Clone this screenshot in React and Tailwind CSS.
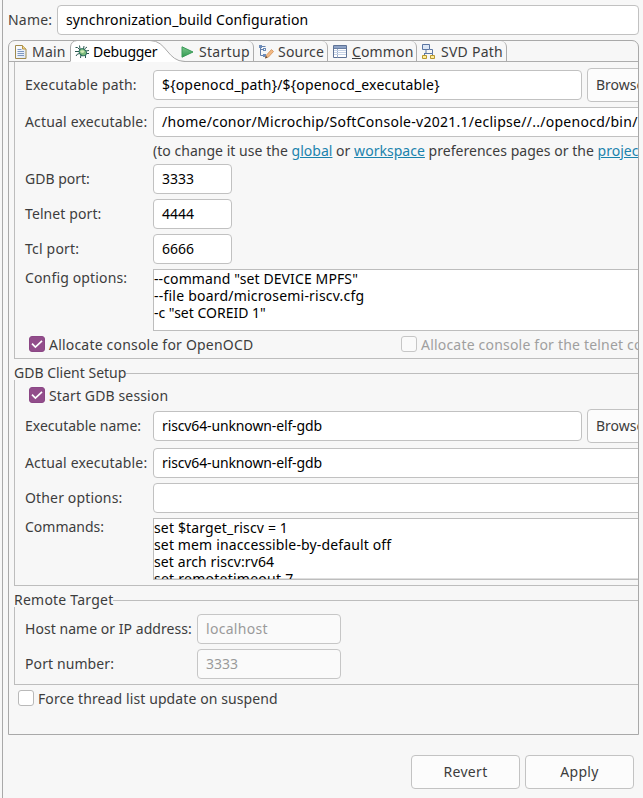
import React from "react";

const line = "border-[#bdbdbd]";

function T({ className = "", children }) {
  return <span className={`inline-block whitespace-nowrap ${className}`}>{children}</span>;
}

function Input({ className = "", tone = "bg-white border-[#c1c1c1] text-black", children }) {
  return (
    <div className={`flex h-[30px] shrink-0 items-center rounded-[4px] border pb-[2px] pl-2 ${tone} ${className}`}>
      {children}
    </div>
  );
}

function Row({ label, className = "", children }) {
  return (
    <div className={`flex h-[30px] items-center ${className}`}>
      <div className="w-32 shrink-0 pb-[2px]">{label}</div>
      {children}
    </div>
  );
}

function Button({ className = "", children }) {
  return (
    <button className={`flex h-[34px] shrink-0 items-center rounded-[4px] border border-[#c3c3c3] bg-[#fcfcfc] pb-[2px] ${className}`}>
      {children}
    </button>
  );
}

function Check({ checked, disabled }) {
  if (checked) {
    return (
      <span className="flex size-4 shrink-0 items-center justify-center rounded-[3px] border border-[#8b4785] bg-[#924d8b]">
        <svg width="14" height="14" viewBox="0 0 14 14" fill="none" stroke="#fff" strokeWidth="1.7">
          <path d="M2 6.600 5.400 10 12 3.800" />
        </svg>
      </span>
    );
  }
  return <span className={`size-4 shrink-0 rounded-[3px] border ${disabled ? "border-[#c6c6c6] bg-[#fafafa]" : "border-[#b9b9b9] bg-white"}`} />;
}

function DocIcon() {
  return (
    <svg width="12" height="14" viewBox="0 0 12 14">
      <defs>
        <linearGradient id="doc" x1="0" y1="0" x2="1" y2="1">
          <stop offset="0" stopColor="#fff" />
          <stop offset="1" stopColor="#dbe6f5" />
        </linearGradient>
      </defs>
      <path d="M.5.5h7l3.500 3.500v9.500H.5z" fill="url(#doc)" stroke="#a08a4c" />
      <path d="M7.500.5V4H11" fill="#f0d78c" stroke="#b89446" />
      <path d="M2.500 4.500h4M2.500 6.500h6.500M2.500 8.500h6.500M2.500 10.500h6.500" stroke="#7d97c0" />
    </svg>
  );
}

function BugIcon() {
  return (
    <svg width="16" height="16" viewBox="0 0 16 16" fill="none">
      <path d="M5.500 1.500 6 5M10 2 9.500 5M1.500 3.500h2L6 6M1 7.500h4M2 12l1.500-2L6 9.500M6.500 14l.5-3.500M11.500 14v-2.500L10 10.500M10.500 5 13 3M12 7l3-.5M12.500 9.500H15" stroke="#2b5750" strokeWidth="1" />
      <ellipse cx="8.800" cy="8.300" rx="4" ry="3.200" transform="rotate(40 8.800 8.300)" fill="#7dbb7c" stroke="#23675a" />
      <ellipse cx="8.400" cy="7.600" rx="2" ry="1.400" fill="#cfe8b4" />
    </svg>
  );
}

function PlayIcon() {
  return (
    <svg width="13" height="12" viewBox="0 0 13 12">
      <defs>
        <linearGradient id="play" x1="0" y1="0" x2="0" y2="1">
          <stop offset="0" stopColor="#7cc68c" />
          <stop offset="1" stopColor="#2f9a50" />
        </linearGradient>
      </defs>
      <path d="M1 .8 12 6 1 11.200z" fill="url(#play)" stroke="#3a9a58" strokeLinejoin="round" />
    </svg>
  );
}

function SourceIcon() {
  return (
    <svg width="16" height="16" viewBox="0 0 16 16" fill="none">
      <path d="M2.500 2v9.500M2.500 5.500h3M2.500 11.500h3M4 2.500h3.500" stroke="#6480ab" />
      <path d="M1 1h3v3H1zM5 4h3v3H5zM5 10h3v3H5z" fill="#6c8cba" />
      <path d="M6 5h1v1H6z" fill="#fff" />
      <path d="M7.500 14 8.500 11l5-5.500L15.500 7.500 10.500 13z" fill="#f3b983" stroke="#d18f55" strokeWidth=".8" />
      <path d="M7 14.500 8 12l1.500 1.500z" fill="#5b4636" />
    </svg>
  );
}

function TableIcon() {
  return (
    <svg width="14" height="14" viewBox="0 0 14 14" fill="none">
      <path d="M.5.5h13v12H.5z" fill="#fff" stroke="#5f7396" />
      <path d="M1 1h12v2H1z" fill="#8ea3c6" />
      <path d="M1 3.500h12" stroke="#6b80a4" />
      <path d="M4.500 4v8.500" stroke="#9aacca" />
      <path d="M1 5.500h12M1 7.500h12M1 9.500h12" stroke="#c5d2e6" />
    </svg>
  );
}

function TreeIcon() {
  return (
    <svg width="15" height="16" viewBox="0 0 15 16" fill="none">
      <path d="M5 6v3M3.500 12V9.500M3 9.500h8.500V12M9 5.500h2.500v4" stroke="#5b76a3" />
      <path d="M1.500.5h7v5h-7z" fill="#dce7f6" stroke="#5b76a3" />
      <path d="M1.500 11.500h4v3h-4zM9.500 11.500h4v3h-4z" fill="#ffee9a" stroke="#b8972f" />
    </svg>
  );
}

function Tab({ icon, className = "", children }) {
  return (
    <div className={`flex h-[21px] items-center rounded-tr-[6px] border-r border-[#adadad] ${className}`}>
      {icon}
      {children}
    </div>
  );
}

function Group({ title, className = "", children }) {
  return (
    <section className={className}>
      <div className="flex h-[14px] items-center">
        <div className="pb-[2px]">{title}</div>
        <div className={`h-px flex-1 border-t ${line}`} />
      </div>
      {children}
    </section>
  );
}

export default function App() {
  return (
    <div className="h-[798px] w-[643px] overflow-hidden bg-[#f7f7f7] pl-[2px] font-['Noto_Sans',sans-serif] text-[14px] leading-[17px] text-[#3d3d3d]">
      <div className="flex h-full flex-col border-l border-[#a9a9a9] pl-[5px] pt-[5px]">
        <div className="flex h-[30px] items-center">
          <div className="w-[49px] shrink-0 pb-[2px]">
            <T className="tracking-[0.2px]">Name:</T>
          </div>
          <Input className="w-[582px]">
            <T className="tracking-[0.12px]">synchronization_build Configuration</T>
          </Input>
        </div>

        <div className="mt-[5px] flex h-[695px] w-[631px] shrink-0 flex-col overflow-hidden rounded-t-[7px] border border-[#a9a9a9]">
          <div className="flex h-[21px] shrink-0 border-b border-[#adadad]">
            <div className="flex h-[21px] w-[61px] items-center pl-[6px]">
              <DocIcon />
              <T className="ml-[5px] tracking-[0.2px]">Main</T>
            </div>
            <div className="relative flex h-[21px] w-[111px] items-center pl-[4px]">
              <svg className="absolute -top-px left-0" width="118" height="22" viewBox="0 0 118 22" fill="none">
                <path d="M0 22V7Q1 1 7 .5H80C97 .5 97 21.500 115 21.500V22z" fill="#fff" />
                <path d="M.5 21.500V7Q1 1 7 .5H80C97 .5 97 21.500 115 21.500" stroke="#a9a9a9" />
              </svg>
              <span className="relative flex items-center text-black">
                <BugIcon />
                <T className="ml-[3px] tracking-[-0.25px]">Debugger</T>
              </span>
            </div>
            <Tab icon={<PlayIcon />} className="w-[73px]">
              <T className="ml-[5px] tracking-[0.3px]">Startup</T>
            </Tab>
            <Tab icon={<SourceIcon />} className="w-[74px] pl-[4px]">
              <T className="ml-[4px] tracking-[0.2px]">Source</T>
            </Tab>
            <Tab icon={<TableIcon />} className="w-[89px] pl-[5px]">
              <T className="ml-[5px] tracking-[0.15px]"><span className="underline">C</span>ommon</T>
            </Tab>
            <Tab icon={<TreeIcon />} className="w-[90px] pl-[4px]">
              <T className="ml-[5px] tracking-[0.25px]">SVD Path</T>
            </Tab>
          </div>

          <div className="flex h-[672px] w-[800px] flex-col pl-[5px]">
            <section className={`h-[297px] shrink-0 border-b border-l ${line} pl-[10px]`}>
              {/* Last visible row of the checkbox label scrolled above the viewport */}
              <div className="mb-[7px] h-px overflow-hidden pl-[24px]">
                <T className="-mt-[16px]">Start OpenOCD locally</T>
              </div>
              <Row label={<T className="tracking-[0.19px]">Executable path:</T>}>
                <Input className="w-[429px]"><T className="tracking-[0.18px]">{"${openocd_path}/${openocd_executable}"}</T></Input>
                <Button className="ml-[5px] w-[90px] pl-[8px]"><T>Browse...</T></Button>
              </Row>
              <Row label={<T className="tracking-[0.17px]">Actual executable:</T>} className="mt-[7px]">
                <Input className="w-[600px]"><T className="tracking-[0.27px]">/home/conor/Microchip/SoftConsole-v2021.1/eclipse//../openocd/bin/openocd</T></Input>
              </Row>
              <div className="flex h-[27px] items-center pl-32">
                <T className="tracking-[0.03px]">
                  (to change it use the <span className="text-[#1b83ad] underline">global</span> or <span className="text-[#1b83ad] underline">workspace</span> preferences pages or the <span className="text-[#1b83ad] underline">project</span>
                </T>
              </div>
              <Row label={<T>GDB port:</T>}><Input className="w-[79px]"><T>3333</T></Input></Row>
              <Row label={<T className="tracking-[0.1px]">Telnet port:</T>} className="mt-[5px]"><Input className="w-[79px]"><T>4444</T></Input></Row>
              <Row label={<T className="tracking-[0.2px]">Tcl port:</T>} className="mt-[5px]"><Input className="w-[79px]"><T>6666</T></Input></Row>
              <div className="mt-[5px] flex h-[62px]">
                <div className="w-32 shrink-0"><T className="tracking-[0.15px]">Config options:</T></div>
                <div className={`flex w-[600px] flex-col items-start border ${line} bg-white text-black`}>
                  <T className="tracking-[0.11px]">--command "set DEVICE MPFS"</T>
                  <T className="tracking-[0.22px]">--file board/microsemi-riscv.cfg</T>
                  <T>-c "set COREID 1"</T>
                </div>
              </div>
              <div className="mt-[5px] flex h-4 items-center pl-[4px]">
                <Check checked />
                <div className="w-[356px] shrink-0 pl-[4px]"><T className="tracking-[0.2px]">Allocate console for OpenOCD</T></div>
                <Check disabled />
                <T className="ml-[4px] tracking-[0.2px] text-[#9f9f9f]">Allocate console for the telnet connections</T>
              </div>
            </section>

            <Group className="mt-[7px]" title={<T>GDB Client Setup</T>}>
              <div className={`h-[206px] border-b border-l ${line} pl-[10px] pt-[7px]`}>
                <div className="flex h-4 items-center pl-[4px]">
                  <Check checked />
                  <T className="ml-[4px] tracking-[0.13px]">Start GDB session</T>
                </div>
                <Row label={<T>Executable name:</T>} className="mt-[8px]">
                  <Input className="w-[429px]"><T className="tracking-[-0.13px]">riscv64-unknown-elf-gdb</T></Input>
                  <Button className="ml-[5px] w-[90px] pl-[8px]"><T>Browse...</T></Button>
                </Row>
                <Row label={<T className="tracking-[0.17px]">Actual executable:</T>} className="mt-[7px]">
                  <Input className="w-[600px]"><T className="tracking-[-0.13px]">riscv64-unknown-elf-gdb</T></Input>
                </Row>
                <Row label={<T className="tracking-[0.15px]">Other options:</T>} className="mt-[5px]"><Input className="w-[600px]" /></Row>
                <div className="mt-[5px] flex h-[62px]">
                  <div className="w-32 shrink-0"><T>Commands:</T></div>
                  <div className={`flex w-[600px] flex-col items-start overflow-hidden border ${line} bg-white text-black shadow-[inset_0_-1px_0_#dedede]`}>
                    <T className="tracking-[0.15px]">set $target_riscv = 1</T>
                    <T className="tracking-[0.14px]">set mem inaccessible-by-default off</T>
                    <T className="tracking-[0.1px]">set arch riscv:rv64</T>
                    <T className="tracking-[0.25px]">set remotetimeout 7</T>
                  </div>
                </div>
              </div>
            </Group>

            <Group className="mt-[7px]" title={<T className="tracking-[0.23px]">Remote Target</T>}>
              <div className={`h-[78px] border-b border-l ${line} pl-[10px] pt-[7px]`}>
                <div className="flex h-[30px] items-center">
                  <div className="w-[172px] shrink-0 pb-[2px]"><T className="tracking-[0.04px]">Host name or IP address:</T></div>
                  <Input className="w-[144px]" tone="bg-[#fafafa] border-[#c6c6c6] text-[#9a9a9a]"><T className="tracking-[0.3px]">localhost</T></Input>
                </div>
                <div className="mt-[5px] flex h-[30px] items-center">
                  <div className="w-[172px] shrink-0 pb-[2px]"><T className="tracking-[0.1px]">Port number:</T></div>
                  <Input className="w-[144px]" tone="bg-[#fafafa] border-[#c6c6c6] text-[#9a9a9a]"><T>3333</T></Input>
                </div>
              </div>
            </Group>

            <div className="mt-[5px] flex h-4 items-center pl-[4px]">
              <Check />
              <T className="ml-[4px] tracking-[0.1px]">Force thread list update on suspend</T>
            </div>
          </div>
        </div>

        <div className="mt-[20px] flex justify-end gap-[5px] pr-[9px]">
          <Button className="w-[109px] justify-center"><T className="tracking-[0.3px]">Revert</T></Button>
          <Button className="w-[109px] justify-center"><T className="tracking-[0.3px]">Apply</T></Button>
        </div>
      </div>
    </div>
  );
}
